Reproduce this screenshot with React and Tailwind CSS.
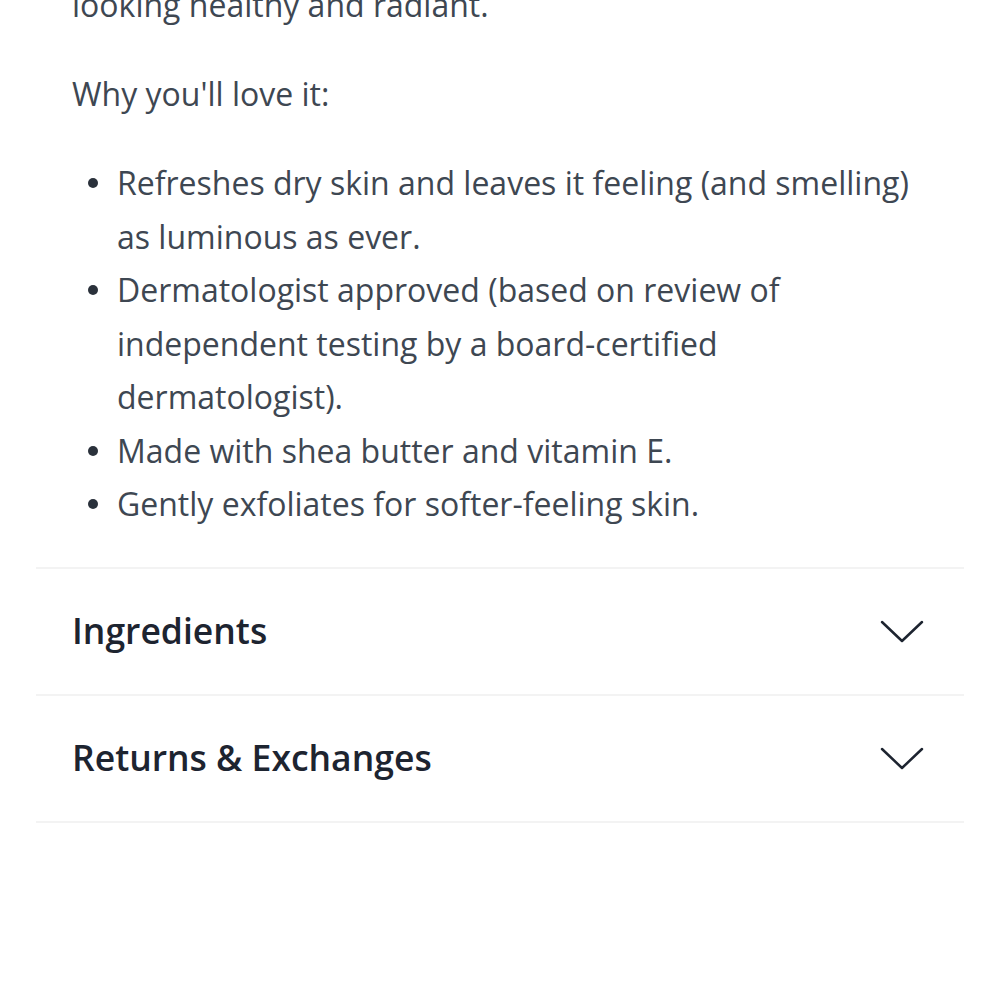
const bullets = [
  "Refreshes dry skin and leaves it feeling (and smelling) as luminous as ever.",
  "Dermatologist approved (based on review of independent testing by a board-certified dermatologist).",
  "Made with shea butter and vitamin E.",
  "Gently exfoliates for softer-feeling skin.",
];

function Chevron() {
  return (
    <svg width="44" height="24" viewBox="0 0 44 24" fill="none" stroke="#1d2430" strokeWidth="2.5" strokeLinecap="round" strokeLinejoin="round">
      <polyline points="2,3 22,22 42,3" />
    </svg>
  );
}

function Row({ title }) {
  return (
    <div className="h-[127px] flex items-center justify-between pl-[36px] pr-[40px] border-b-2 border-[#f3f3f3]">
      <span className="text-[35.5px] font-semibold text-[#1d2430] leading-none">{title}</span>
      <Chevron />
    </div>
  );
}

export default function App() {
  return (
    <div className="w-[1000px] h-[1000px] bg-white overflow-hidden" style={{ fontFamily: '"Open Sans", sans-serif' }}>
      <div className="px-[36px]">
        <div className="px-[36px] text-[32px] leading-[53.5px] text-[#3e4752]">
          <p className="-mt-[22px]">looking healthy and radiant.</p>
          <p className="mt-[35.5px]">Why you'll love it:</p>
          <ul className="mt-[35.5px]">
            {bullets.map((b) => (
              <li key={b} className="flex">
                <span className="w-[45px] shrink-0 flex justify-start pl-[16px] pt-[22px]">
                  <span className="block w-[10px] h-[10px] rounded-full bg-[#2a313b]" />
                </span>
                <span className="min-w-0 flex-1">{b}</span>
              </li>
            ))}
          </ul>
        </div>
        <div className="mt-[36px] border-t-2 border-[#f3f3f3]">
          <Row title="Ingredients" />
          <Row title="Returns & Exchanges" />
        </div>
      </div>
    </div>
  );
}
